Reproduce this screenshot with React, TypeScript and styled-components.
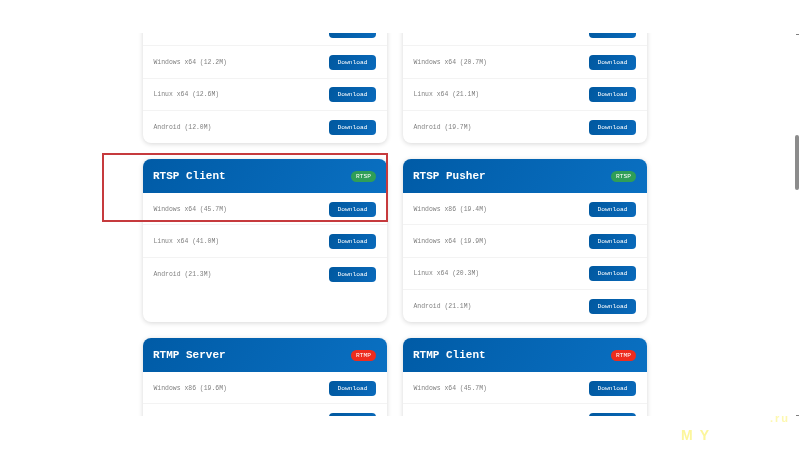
import { createGlobalStyle, styled } from "styled-components";

type Product = {
    title: string;
    badge?: string;
    tone?: "green" | "red";
    builds: string[];
};

const products: Product[] = [
    { title: "", builds: ["", "Windows x64 (12.2M)", "Linux x64 (12.6M)", "Android (12.0M)"] },
    { title: "", builds: ["", "Windows x64 (20.7M)", "Linux x64 (21.1M)", "Android (19.7M)"] },
    { title: "RTSP Client", badge: "RTSP", tone: "green", builds: ["Windows x64 (45.7M)", "Linux x64 (41.0M)", "Android (21.3M)"] },
    { title: "RTSP Pusher", badge: "RTSP", tone: "green", builds: ["Windows x86 (19.4M)", "Windows x64 (19.9M)", "Linux x64 (20.3M)", "Android (21.1M)"] },
    { title: "RTMP Server", badge: "RTMP", tone: "red", builds: ["Windows x86 (19.6M)", ""] },
    { title: "RTMP Client", badge: "RTMP", tone: "red", builds: ["Windows x64 (45.7M)", ""] },
];

const App = () => {
    return (
        <>
            <GlobalStyle />
            <Page>
                <Viewport>
                    <Grid>
                        {products.map((product, i) => (
                            <Card key={i}>
                                <CardHeader>
                                    <CardTitle>{product.title}</CardTitle>
                                    {product.badge && <Badge $tone={product.tone}>{product.badge}</Badge>}
                                </CardHeader>
                                {product.builds.map((build, j) => (
                                    <Row key={j}>
                                        <BuildName>{build}</BuildName>
                                        {/* rows cut by the scroll edge only show the button's rim */}
                                        <DownloadButton>{build && "Download"}</DownloadButton>
                                    </Row>
                                ))}
                            </Card>
                        ))}
                    </Grid>
                </Viewport>
                <Highlight />
                <ScrollThumb />
                <ScrollTick $top={34} />
                <ScrollTick $top={415} />
                <WatermarkMain>MY</WatermarkMain>
                <WatermarkDomain>.ru</WatermarkDomain>
            </Page>
        </>
    );
};

const GlobalStyle = createGlobalStyle`
    html, body {
        margin: 0;
        padding: 0;
        background: #ffffff;
    }
    * {
        box-sizing: border-box;
    }
`;

const Page = styled.div`
    position: relative;
    width: 800px;
    height: 450px;
    padding-top: 33px;
    overflow: hidden;
    background: #ffffff;
    font-family: "Liberation Mono", "Courier New", monospace;
    filter: blur(0.4px);
`;

const Viewport = styled.div`
    height: 383px;
    overflow: hidden;
`;

const Grid = styled.div`
    display: grid;
    grid-template-columns: 244px 244px;
    gap: 16px;
    margin: -53px 0 0 143px;
`;

const Card = styled.div`
    background: #ffffff;
    border-radius: 8px;
    overflow: hidden;
    box-shadow: 0 1px 5px rgba(0, 0, 0, 0.16);
`;

const CardHeader = styled.div`
    display: flex;
    align-items: center;
    justify-content: space-between;
    height: 34px;
    padding: 0 11px 0 10px;
    background: linear-gradient(120deg, #005ba6, #0a70c2);
`;

const CardTitle = styled.h3`
    margin: 0;
    font-size: 11px;
    font-weight: 700;
    color: #ffffff;
`;

const Badge = styled.span<{ $tone?: "green" | "red" }>`
    display: flex;
    align-items: center;
    justify-content: center;
    width: 25px;
    height: 11px;
    border-radius: 6px;
    font-size: 6.2px;
    font-weight: 400;
    color: #ffffff;
    background: ${(p) => (p.$tone === "red" ? "#ee2c1e" : "#2f9e57")};
`;

const Row = styled.div`
    display: flex;
    align-items: center;
    justify-content: space-between;
    height: 32.25px;
    padding: 1px 11px 0 10.5px;
    border-bottom: 1px solid #f3f3f3;

    &:last-child {
        border-bottom: none;
    }
`;

const BuildName = styled.span`
    font-size: 6.45px;
    color: #808080;
`;

const DownloadButton = styled.button`
    width: 47px;
    height: 15px;
    padding: 0;
    border: none;
    border-radius: 4px;
    background: linear-gradient(120deg, #00589f, #0a6abb);
    color: #ffffff;
    font-family: inherit;
    font-size: 6.25px;
    font-weight: 400;
`;

const Highlight = styled.div`
    position: absolute;
    left: 102px;
    top: 153px;
    width: 286px;
    height: 69px;
    border: 2px solid #c63a3d;
`;

const ScrollThumb = styled.div`
    position: absolute;
    left: 795px;
    top: 135px;
    width: 3.5px;
    height: 55px;
    border-radius: 2px;
    background: #8c8c8c;
`;

const ScrollTick = styled.div<{ $top: number }>`
    position: absolute;
    left: 796px;
    top: ${(p) => p.$top}px;
    width: 3px;
    height: 1px;
    background: #808080;
`;

const WatermarkMain = styled.span`
    position: absolute;
    left: 681px;
    top: 427px;
    font-family: "Liberation Sans", Arial, sans-serif;
    font-size: 14px;
    font-weight: 700;
    letter-spacing: 7px;
    color: #fcf69c;
`;

const WatermarkDomain = styled.span`
    position: absolute;
    left: 770px;
    top: 412px;
    font-family: "Liberation Sans", Arial, sans-serif;
    font-size: 11px;
    font-weight: 700;
    letter-spacing: 2px;
    color: #fdf8b0;
`;

export default App;
